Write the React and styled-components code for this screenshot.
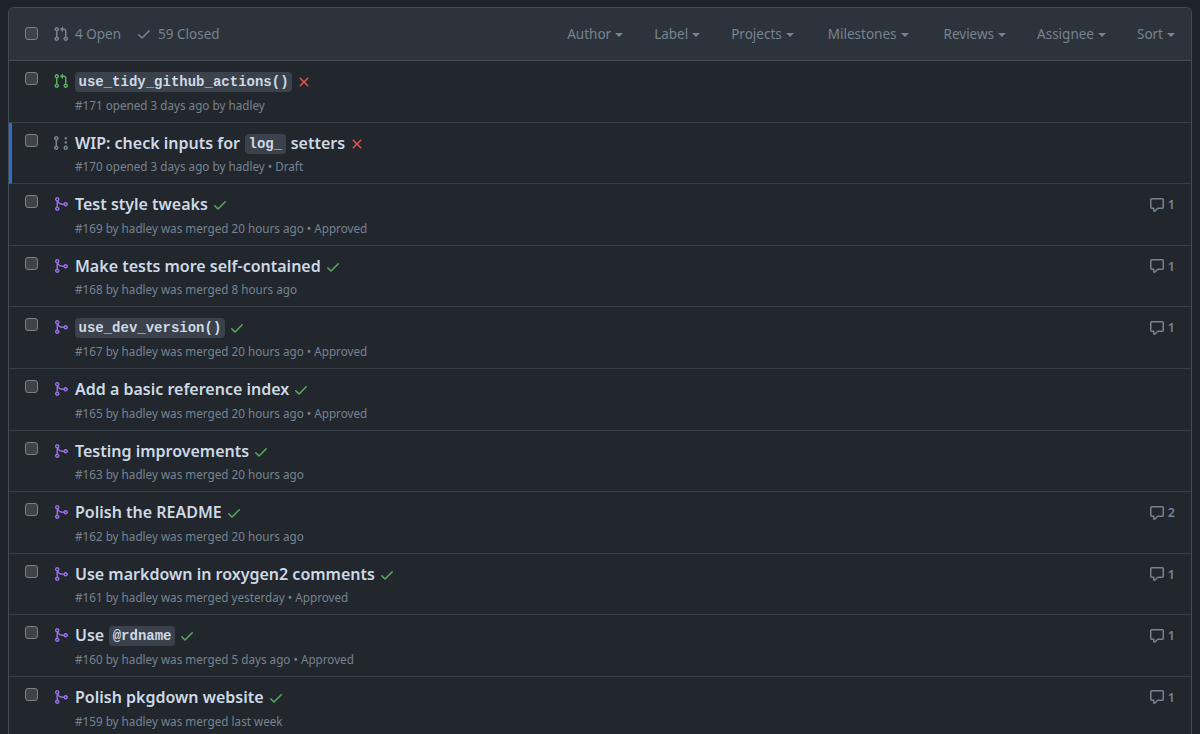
import React from 'react'
import styled, { createGlobalStyle } from 'styled-components'

const GlobalStyle = createGlobalStyle`
  html, body { margin: 0; padding: 0; background: #1f242b; height: 734px; overflow: hidden; }
  body { font-family: "Noto Sans", "Open Sans", sans-serif; color: #adbac7; }
`

const icons = {
  open: 'M7.177 3.073L9.573.677A.25.25 0 0110 .854v4.792a.25.25 0 01-.427.177L7.177 3.427a.25.25 0 010-.354zM3.75 2.5a.75.75 0 100 1.5.75.75 0 000-1.5zm-2.25.75a2.25 2.25 0 113 2.122v5.256a2.251 2.251 0 11-1.5 0V5.372A2.25 2.25 0 011.5 3.25zM11 2.5h-1V4h1a1 1 0 011 1v5.628a2.251 2.251 0 101.5 0V5A2.5 2.5 0 0011 2.5zm1 10.25a.75.75 0 111.5 0 .75.75 0 01-1.5 0zM3.75 12a.75.75 0 100 1.5.75.75 0 000-1.5z',
  merged: 'M5 3.254V3.25v.005a.75.75 0 110-.005v.004zm.45 1.9a2.25 2.25 0 10-1.95.218v5.256a2.25 2.25 0 101.5 0V7.123A5.735 5.735 0 009.25 9h1.378a2.251 2.251 0 100-1.5H9.25a4.25 4.25 0 01-3.8-2.346zM12.75 9a.75.75 0 100-1.5.75.75 0 000 1.5zm-8.5 4.5a.75.75 0 100-1.5.75.75 0 000 1.5z',
  draft: 'M2.5 3.25a.75.75 0 111.5 0 .75.75 0 01-1.5 0zM3.25 1a2.25 2.25 0 00-.75 4.372v5.256a2.251 2.251 0 101.5 0V5.372A2.25 2.25 0 003.25 1zm0 11a.75.75 0 100 1.5.75.75 0 000-1.5zm9.5 3a2.25 2.25 0 100-4.5 2.25 2.25 0 000 4.5zm0-3a.75.75 0 100 1.5.75.75 0 000-1.5zM14 7.5a1.25 1.25 0 11-2.5 0 1.25 1.25 0 012.5 0zm0-4.25a1.25 1.25 0 11-2.5 0 1.25 1.25 0 012.5 0z',
  check: 'M13.78 4.22a.75.75 0 010 1.06l-7.25 7.25a.75.75 0 01-1.06 0L2.22 9.28a.75.75 0 011.06-1.06L6 10.94l6.72-6.72a.75.75 0 011.06 0z',
  x: 'M3.72 3.72a.75.75 0 011.06 0L8 6.94l3.22-3.22a.75.75 0 111.06 1.06L9.06 8l3.22 3.22a.75.75 0 11-1.06 1.06L8 9.06l-3.22 3.22a.75.75 0 01-1.06-1.06L6.94 8 3.72 4.78a.75.75 0 010-1.06z',
  comment: 'M2.75 2.5a.25.25 0 00-.25.25v7.5c0 .138.112.25.25.25h2a.75.75 0 01.75.75v2.19l2.72-2.72a.75.75 0 01.53-.22h4.5a.25.25 0 00.25-.25v-7.5a.25.25 0 00-.25-.25H2.75zM1 2.75C1 1.784 1.784 1 2.75 1h10.5c.966 0 1.75.784 1.75 1.75v7.5A1.75 1.75 0 0113.25 12H9.06l-2.573 2.573A1.457 1.457 0 014 13.543V12H2.75A1.75 1.75 0 011 10.25v-7.5z',
}

const Octicon = ({ name, color, size = 16 }) => (
  <svg width={size} height={size} viewBox="0 0 16 16" fill={color} style={{ flex: 'none' }}>
    <path fillRule="evenodd" d={icons[name]} />
  </svg>
)

const Page = styled.div`
  height: 734px;
  padding: 7px 8px 0;
  box-sizing: border-box;
  overflow: hidden;
`
const Box = styled.div`
  border: 1px solid #444c56;
  border-bottom: 0;
  border-radius: 6px 6px 0 0;
  background: #22272e;
`
const Header = styled.div`
  height: 53px;
  box-sizing: border-box;
  display: flex;
  align-items: center;
  padding: 0 16px;
  background: #2d333b;
  border-bottom: 1px solid #444c56;
  border-radius: 6px 6px 0 0;
`
const Check = styled.span`
  width: 11px;
  height: 11px;
  flex: none;
  margin-top: ${p => (p.$row ? 1 : -2)}px;
  background: #404347;
  border: 1px solid #7d8186;
  border-radius: 3px;
`
const States = styled.div`
  display: flex;
  align-items: center;
  margin-left: 15px;
  gap: 15px;
  font-size: 13.5px;
  color: #768390;
`
const State = styled.span`
  display: flex;
  align-items: center;
  gap: 6px;
`
const Filters = styled.div`
  margin-left: auto;
  display: flex;
  align-items: center;
  font-size: 13.5px;
  color: #768390;
`
const Filter = styled.span`
  display: flex;
  align-items: center;
  gap: 4px;
  margin-left: ${p => p.$gap}px;
  &::after {
    content: '';
    border: 4px solid transparent;
    border-top-color: #768390;
    border-bottom: 0;
    margin-top: 2px;
  }
`
const Row = styled.div`
  height: 61.6px;
  box-sizing: border-box;
  display: flex;
  align-items: flex-start;
  padding: 10px 16px 0 ${p => (p.$active ? 13 : 16)}px;
  border-bottom: 1px solid #373e47;
  border-left: ${p => (p.$active ? '3px solid #316dca' : '0')};
`
const RowIcon = styled.div`
  margin: 1px 0 0 15px;
  width: 22px;
  flex: none;
`
const Main = styled.div`
  flex: 1;
  min-width: 0;
`
const Title = styled.div`
  display: flex;
  align-items: center;
  height: 22px;
  font-size: 16px;
  font-weight: 600;
  color: #cdd9e5;
  white-space: pre;
  gap: 5px;
  svg { margin-left: -1px; }
`
const TitleText = styled.span`
  margin-bottom: 2px;
`
const Code = styled.code`
  font-family: "Liberation Mono", monospace;
  font-size: 14px;
  font-weight: 700;
  background: #3b424b;
  color: #cdd9e5;
  padding: 2px 3.5px;
  border-radius: 4px;
`
const Meta = styled.div`
  margin-top: 2.6px;
  font-size: 11.7px;
  line-height: 18px;
  color: #768390;
`
const Comments = styled.div`
  display: flex;
  align-items: center;
  gap: 3px;
  margin-top: 2px;
  font-size: 12.5px;
  font-weight: 600;
  color: #768390;
`

const filters = [
  ['Author', 0], ['Label', 31], ['Projects', 31], ['Milestones', 34],
  ['Reviews', 35], ['Assignee', 31], ['Sort', 31],
]

const rows = [
  { icon: 'open', color: '#57ab5a', title: [['c', 'use_tidy_github_actions()']], fail: true, meta: '#171 opened 3 days ago by hadley' },
  { icon: 'draft', color: '#768390', active: true, title: [['t', 'WIP: check inputs for'], ['c', 'log_'], ['t', 'setters']], fail: true, meta: '#170 opened 3 days ago by hadley • Draft' },
  { title: [['t', 'Test style tweaks']], meta: '#169 by hadley was merged 20 hours ago • Approved', comments: 1 },
  { title: [['t', 'Make tests more self-contained']], meta: '#168 by hadley was merged 8 hours ago', comments: 1 },
  { title: [['c', 'use_dev_version()']], meta: '#167 by hadley was merged 20 hours ago • Approved', comments: 1 },
  { title: [['t', 'Add a basic reference index']], meta: '#165 by hadley was merged 20 hours ago • Approved' },
  { title: [['t', 'Testing improvements']], meta: '#163 by hadley was merged 20 hours ago' },
  { title: [['t', 'Polish the README']], meta: '#162 by hadley was merged 20 hours ago', comments: 2 },
  { title: [['t', 'Use markdown in roxygen2 comments']], meta: '#161 by hadley was merged yesterday • Approved', comments: 1 },
  { title: [['t', 'Use'], ['c', '@rdname']], meta: '#160 by hadley was merged 5 days ago • Approved', comments: 1 },
  { title: [['t', 'Polish pkgdown website']], meta: '#159 by hadley was merged last week', comments: 1 },
]

export default function App() {
  return (
    <Page>
      <GlobalStyle />
      <Box>
        <Header>
          <Check />
          <States>
            <State><Octicon name="open" color="#768390" />4 Open</State>
            <State><Octicon name="check" color="#768390" />59 Closed</State>
          </States>
          <Filters>
            {filters.map(([name, gap]) => <Filter key={name} $gap={gap}>{name}</Filter>)}
          </Filters>
        </Header>
        {rows.map(row => (
          <Row key={row.meta} $active={row.active}>
            <Check $row />
            <RowIcon><Octicon name={row.icon || 'merged'} color={row.color || '#986ee2'} /></RowIcon>
            <Main>
              <Title>
                {row.title.map(([kind, text]) => (kind === 'c' ? <Code key={text}>{text}</Code> : <TitleText key={text}>{text}</TitleText>))}
                <Octicon name={row.fail ? 'x' : 'check'} color={row.fail ? '#e5534b' : '#57ab5a'} />
              </Title>
              <Meta>{row.meta}</Meta>
            </Main>
            {row.comments && (
              <Comments><Octicon name="comment" color="#768390" />{row.comments}</Comments>
            )}
          </Row>
        ))}
      </Box>
    </Page>
  )
}
